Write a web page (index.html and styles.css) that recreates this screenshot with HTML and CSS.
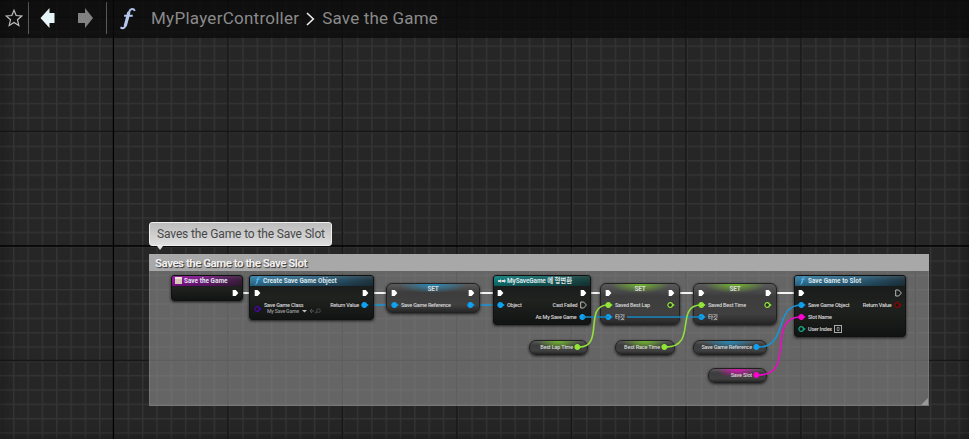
FILE: index.html
```html
<!DOCTYPE html>
<html lang="ko">
<head>
<meta charset="utf-8">
<title>MyPlayerController</title>
<link rel="stylesheet" href="styles.css">
</head>
<body>
<svg class="defs" width="0" height="0" aria-hidden="true">
  <defs>
    <symbol id="exec" viewBox="0 0 7 8"><path d="M.7 1H3.7L6.4 4L3.7 7H.7Z" stroke-linejoin="round"/></symbol>
    <symbol id="pin" viewBox="0 0 8 6"><path d="M5.5 1.5L7.8 3L5.5 4.5Z" fill="currentColor"/><circle class="dot" cx="3.2" cy="3" r="2.3" stroke="currentColor" stroke-width="1.2"/></symbol>
    <symbol id="fn" viewBox="0 0 16 22"><path d="M15 3.7C13.8 1.2 10.8 1.2 9.6 4.7L6.1 17.5C5.3 20.5 3.2 21 1.4 19.3M4.8 8.4H13" fill="none" stroke="currentColor" stroke-width="2"/><path d="M9.3 5L5.8 18.2" stroke="currentColor" stroke-width="3"/></symbol>
  </defs>
</svg>
<main class="graph">
  <svg class="grid" width="969" height="439">
    <defs>
      <pattern id="minor" x="-1.3" y="16.8" width="14.325" height="14.325" patternUnits="userSpaceOnUse">
        <path d="M0 .7H14.325M.7 0V14.325" stroke="#343434" stroke-width="1.4"/>
      </pattern>
    </defs>
    <rect width="969" height="439" fill="#262626"/>
    <rect width="969" height="439" fill="url(#minor)"/>
    <path d="M0 17.5H969M0 131.5H969M0 360.5H969M228 0V439M342.5 0V439M457 0V439M571.5 0V439M686 0V439M801 0V439M915.5 0V439" stroke="#171717" stroke-width="1.4"/>
    <path d="M0 246H969M113.5 0V439" stroke="#000" stroke-width="1.4"/>
  </svg>

  <header class="toolbar">
    <svg class="star" width="18" height="18" viewBox="0 0 18 18"><path d="M9 1.3L11.2 6.5L16.7 7L12.5 10.8L13.8 16.4L9 13.4L4.2 16.4L5.5 10.8L1.3 7L6.8 6.5Z" fill="none" stroke="#c4c4c4" stroke-width="1.2"/></svg>
    <i class="rule"></i>
    <svg class="back" width="16" height="22" viewBox="0 0 16 22"><path d="M.5 11L9.5 1V6H14.5V16H9.5V21Z" fill="#e7f6f8"/></svg>
    <svg class="forward" width="17" height="22" viewBox="0 0 17 22"><path d="M16 11L8 1V6H1V16H8V21Z" fill="#828282"/></svg>
    <i class="rule"></i>
    <svg class="func" width="17" height="23"><use href="#fn"/></svg>
    <span class="crumb owner">MyPlayerController</span>
    <svg class="chevron" width="9" height="14" viewBox="0 0 9 14"><path d="M1 1L7.3 7L1 13" fill="none" stroke="#ededed" stroke-width="1.6"/></svg>
    <span class="crumb">Save the Game</span>
  </header>

  <section class="comment"><h2>Saves the Game to the Save Slot</h2><svg class="grip" width="7" height="7"><path d="M7 0V7H0Z" fill="#999"/></svg></section>
  <div class="bubble">Saves the Game to the Save Slot</div>

  <svg class="wires" width="969" height="439" fill="none">
    <g stroke="#f4f4f4" stroke-width="2"><path d="M236 293H257M367 293H394M472 293H500M583 293H609M672 293H702M769 293H801"/></g>
    <g stroke="#1a94d5" stroke-width="1.5"><path d="M366 305H394M472 305H500"/></g>
  </svg>

  <article class="node entry">
    <h3><i class="sheet"></i>Save the Game</h3>
    <div class="row"><span></span><svg class="exec"><use href="#exec"/></svg></div>
  </article>

  <article class="node create">
    <h3><svg class="f"><use href="#fn"/></svg>Create Save Game Object</h3>
    <div class="row"><svg class="exec"><use href="#exec"/></svg><svg class="exec"><use href="#exec"/></svg></div>
    <div class="row">
      <span class="side class-side"><svg class="pin open purple"><use href="#pin"/></svg><span>Save Game Class</span></span>
      <span class="side"><span>Return Value</span><svg class="pin blue"><use href="#pin"/></svg></span>
    </div>
    <div class="picker"><span>My Save Game</span><svg width="20" height="6" viewBox="0 0 20 6"><path d="M0 2H5L2.5 4.5Z" fill="#bbb"/><path d="M12 3H8M10 1L8 3L10 5M13 5L15 3.8" stroke="#555" fill="none"/><circle cx="16.5" cy="2.7" r="1.8" fill="none" stroke="#555" stroke-width=".8"/></svg></div>
  </article>

  <article class="node setter set-ref blue-glow">
    <h4>SET</h4>
    <div class="row"><svg class="exec"><use href="#exec"/></svg><svg class="exec"><use href="#exec"/></svg></div>
    <div class="row"><span class="side"><svg class="pin blue"><use href="#pin"/></svg><span>Save Game Reference</span></span><svg class="pin blue"><use href="#pin"/></svg></div>
  </article>

  <article class="node cast">
    <h3><svg class="casticon" width="8" height="6" viewBox="0 0 8 6"><path d="M0 2H2V1L4 3L2 5V4H0ZM4 2H6V1L8 3L6 5V4H4Z" fill="#ddd"/></svg>MySaveGame 에 형변환</h3>
    <div class="row"><svg class="exec"><use href="#exec"/></svg><svg class="exec"><use href="#exec"/></svg></div>
    <div class="row"><span class="side"><svg class="pin blue"><use href="#pin"/></svg><span>Object</span></span><span class="side"><span>Cast Failed</span><svg class="exec hollow"><use href="#exec"/></svg></span></div>
    <div class="row"><span></span><span class="side"><span>As My Save Game</span><svg class="pin blue"><use href="#pin"/></svg></span></div>
  </article>

  <article class="node setter set-lap green-glow">
    <h4>SET</h4>
    <div class="row"><svg class="exec"><use href="#exec"/></svg><svg class="exec"><use href="#exec"/></svg></div>
    <div class="row"><span class="side"><svg class="pin green"><use href="#pin"/></svg><span>Saved Best Lap</span></span><svg class="pin open green"><use href="#pin"/></svg></div>
    <div class="row"><span class="side"><svg class="pin blue"><use href="#pin"/></svg><span>타깃</span></span></div>
  </article>

  <article class="node setter set-time green-glow">
    <h4>SET</h4>
    <div class="row"><svg class="exec"><use href="#exec"/></svg><svg class="exec"><use href="#exec"/></svg></div>
    <div class="row"><span class="side"><svg class="pin green"><use href="#pin"/></svg><span>Saved Best Time</span></span><svg class="pin open green"><use href="#pin"/></svg></div>
    <div class="row"><span class="side"><svg class="pin blue"><use href="#pin"/></svg><span>타깃</span></span></div>
  </article>

  <article class="node slot">
    <h3><svg class="f"><use href="#fn"/></svg>Save Game to Slot</h3>
    <div class="row"><svg class="exec"><use href="#exec"/></svg><svg class="exec hollow"><use href="#exec"/></svg></div>
    <div class="row"><span class="side"><svg class="pin blue"><use href="#pin"/></svg><span>Save Game Object</span></span><span class="side"><span>Return Value</span><svg class="pin open red"><use href="#pin"/></svg></span></div>
    <div class="row"><span class="side"><svg class="pin pink"><use href="#pin"/></svg><span>Slot Name</span></span></div>
    <div class="row"><span class="side"><svg class="pin open teal"><use href="#pin"/></svg><span>User Index</span><b class="num">0</b></span></div>
  </article>

  <article class="node pill lap green-glow"><span>Best Lap Time</span><svg class="pin green"><use href="#pin"/></svg></article>
  <article class="node pill race green-glow"><span>Best Race Time</span><svg class="pin green"><use href="#pin"/></svg></article>
  <article class="node pill ref blue-glow"><span>Save Game Reference</span><svg class="pin blue"><use href="#pin"/></svg></article>
  <article class="node pill name pink-glow"><span>Save Slot</span><svg class="pin pink"><use href="#pin"/></svg></article>

  <svg class="wires" width="969" height="439" fill="none" stroke-width="1.6">
    <path d="M583 317H609M627 317H702" stroke="#1787be"/>
    <path d="M579 347C605 347 583 305 608 305M666 347C698 347 674 305 701 305" stroke="#91df3c"/>
    <path d="M759 347C788 347 774 305 801 305" stroke="#1a94d5"/>
    <path d="M759 375C797 375 765 317 801 317" stroke="#ec0bc4"/>
  </svg>
</main>
</body>
</html>
```

FILE: styles.css
```css
* { box-sizing: border-box; }
body { margin: 0; overflow: hidden; background: #262626; font-family: Roboto, "Noto Sans CJK KR", sans-serif; }
h2, h3, h4 { margin: 0; }
svg { display: block; flex: none; }
.defs { position: absolute; }
.graph { position: relative; width: 969px; height: 439px; overflow: hidden; }
.graph::after { content: ""; position: absolute; inset: 0; box-shadow: inset 0 0 16px rgba(0,0,0,.35); pointer-events: none; }
.grid, .wires { position: absolute; left: 0; top: 0; }

.toolbar { position: relative; display: flex; align-items: center; height: 38px; padding: 0 0 2px 5px; background: rgba(10,10,10,.78); }
.rule { width: 1px; height: 32px; margin-left: 5px; background: #5a5a5a; }
.back { margin-left: 11px; }
.forward { margin-left: 21px; }
.forward + .rule { margin-left: 12px; }
.func { margin-left: 12px; color: #b5c7ef; }
.crumb { font-size: 17px; line-height: 20px; color: #8b8b8b; letter-spacing: .16px; }
.owner { margin-left: 15px; letter-spacing: .26px; }
.chevron { margin: 1px 7px 0 7px; }

.comment { position: absolute; left: 149px; top: 254px; width: 780px; height: 152px; background: rgba(150,150,150,.57); border: 1px solid rgba(130,130,130,.6); }
.comment h2 { height: 17px; margin: -1px -1px 0; padding-left: 6px; background: #a8a8a8; color: #f0f0f0; font-size: 11.5px; line-height: 18px; font-weight: 700; letter-spacing: -.5px; text-shadow: 1px 1px 1px #333; }
.grip { position: absolute; right: 0; bottom: 0; }
.bubble { position: absolute; left: 149px; top: 222px; width: 183px; height: 24px; padding-left: 7px; border: 1px solid #eee; border-radius: 3px; background: linear-gradient(#bcbcbc, #dedede); color: #484848; font-size: 12px; line-height: 23px; letter-spacing: -.14px; white-space: nowrap; }
.bubble::after { content: ""; position: absolute; left: 7px; top: 23px; border: 3.5px solid transparent; border-top: 4px solid #e4e4e4; }

.node { position: absolute; border: 1px solid #101211; border-radius: 3px; background: linear-gradient(#151817, #202220 50%, #121413); box-shadow: 0 1px 3px rgba(0,0,0,.75); color: #d8d8d8; font-size: 5.5px; font-weight: 500; letter-spacing: -.22px; line-height: 8px; white-space: nowrap; }
.node h3 { display: flex; align-items: center; height: 10px; margin-bottom: 1px; padding: 0 0 1px 4px; border-radius: 2px 2px 0 0; font-size: 6.4px; font-weight: 700; letter-spacing: .03px; line-height: 8px; color: #dfe6e9; background: linear-gradient(rgba(255,255,255,.1), transparent 40%, rgba(0,0,0,.25)), linear-gradient(90deg, #357ba0, #2b5c77 60%, #203642); }
.row { display: flex; align-items: center; justify-content: space-between; height: 12px; padding: 0 4px; }
.cast .row, .slot .row { padding: 0 3.5px 0 3px; }
.side { display: flex; align-items: center; gap: 2px; }
.exec { width: 7px; height: 8px; fill: #fff; }
.hollow { fill: none; stroke: #ddd; stroke-width: .8; }
.pin { width: 8px; height: 6px; }
.pin.open { --hole: #171a18; }
.dot { fill: var(--hole, currentColor); }
.blue { color: #10a2f1; }
.green { color: #91e637; }
.pink { color: #fd04d0; }
.purple { color: #4c06ac; }
.teal { color: #14ac84; }
.red { color: #8b0505; }
.f { width: 7px; height: 9px; margin-right: 2px; color: #54b7ee; }
.sheet { width: 7px; height: 7px; margin-right: 2px; background: #d5c6b5; border-top: 2px solid #eee4d9; }

.entry { left: 171px; top: 275px; width: 72px; height: 26px; }
.entry .row { padding-right: 3px; }
.entry h3 { padding-left: 3px; background: linear-gradient(rgba(255,255,255,.08), transparent 40%, rgba(0,0,0,.25)), linear-gradient(90deg, #9414a0, #701b7a 50%, #372039); }
.create { left: 249px; top: 275px; width: 125px; height: 45px; }
.class-side .pin { margin-top: 7px; }
.picker { display: flex; align-items: center; gap: 3px; height: 6px; margin-top: -3px; padding-left: 17px; color: #999; font-size: 5.2px; line-height: 6px; }
.cast { left: 493px; top: 275px; width: 98px; height: 50px; }
.cast h3 { letter-spacing: -.08px; background: linear-gradient(rgba(255,255,255,.08), transparent 40%, rgba(0,0,0,.25)), linear-gradient(90deg, #117d7c, #16605f 55%, #193d3b); }
.casticon { margin-right: 1px; }
.slot { left: 794px; top: 275px; width: 112px; height: 62px; }
.num { width: 8px; height: 8px; border: 1px solid #aaa; font-weight: 400; line-height: 6px; text-align: center; }

.setter { padding-top: 3px; border: 1px solid #222; border-radius: 6px; }
.setter h4 { position: absolute; left: 0; right: 0; top: 1px; text-align: center; font-size: 6.4px; line-height: 9px; font-weight: 700; }
.setter .open { --hole: #2a2a2a; }
.blue-glow, .green-glow, .pink-glow { background: radial-gradient(ellipse 38% 9px at 50% 0, var(--glow), transparent), linear-gradient(#5a5a5a, #3d3d3d 30%, #404040 75%, #262626); }
.blue-glow { --glow: #2789b6; }
.green-glow { --glow: #70b52d; }
.pink-glow { --glow: #d814b2; }
.set-ref { left: 386px; top: 283px; width: 94px; height: 30px; }
.set-lap { left: 600px; top: 283px; width: 80px; height: 42px; }
.set-time { left: 693px; top: 283px; width: 84px; height: 42px; }
.pill { display: flex; align-items: center; justify-content: flex-end; gap: 1px; height: 15px; padding: 0 5px 1px 0; border: 1px solid #202020; border-radius: 7px; letter-spacing: -.18px; }
.lap { left: 529px; top: 340px; width: 59px; }
.race { left: 615px; top: 340px; width: 60px; }
.ref { left: 693px; top: 340px; width: 74px; }
.name { left: 708px; top: 368px; width: 59px; }
```
